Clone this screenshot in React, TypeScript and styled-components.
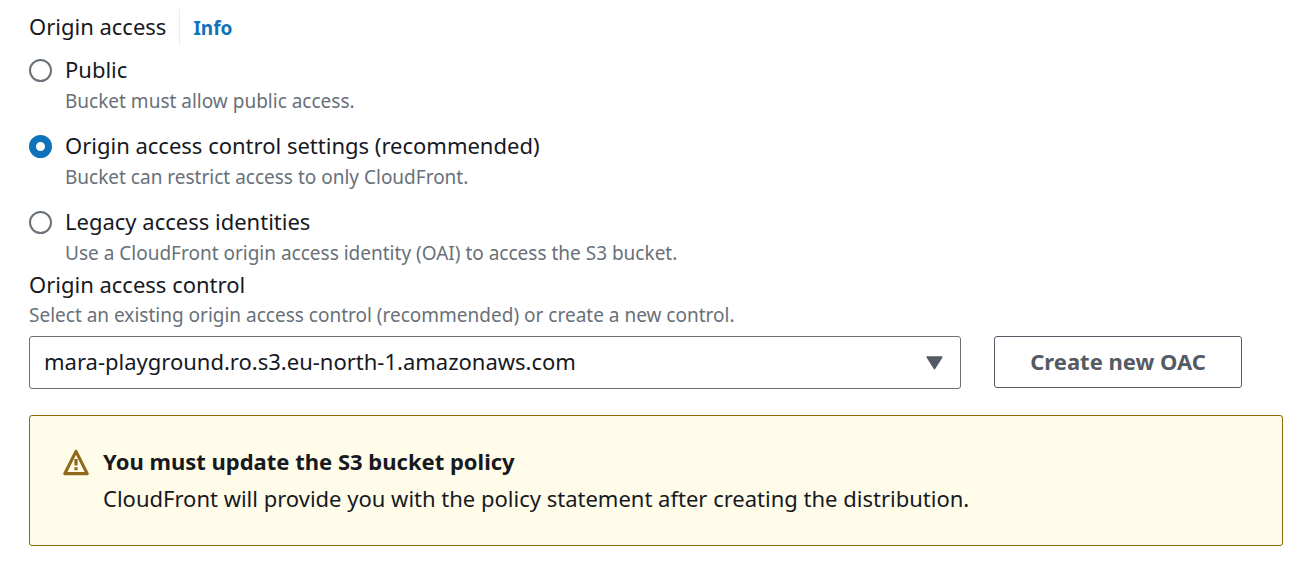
import React, { useState } from "react";
import styled, { createGlobalStyle } from "styled-components";

const GlobalStyle = createGlobalStyle`
  *, *::before, *::after { box-sizing: border-box; }
  body {
    margin: 0;
    background: #fff;
    color: #16191f;
    font-family: "Noto Sans", "Open Sans", sans-serif;
    font-size: 22px;
    line-height: 30px;
  }
`;

const Page = styled.main`
  padding: 9px 26px 36px 29px;
`;

const OptionGroup = styled.fieldset`
  margin: 0;
  padding: 0;
  border: 0;
  min-width: 0;
`;

const GroupHeader = styled.div`
  display: flex;
  align-items: flex-start;
  height: 37px;
  margin-bottom: 8px;
`;

const GroupTitle = styled.span`
  line-height: 34px;
`;

const InfoLink = styled.a`
  display: flex;
  align-items: center;
  height: 37px;
  margin-left: 13px;
  padding-left: 13px;
  border-left: 1px solid #eaeded;
  color: #0f73ba;
  font-size: 19px;
  font-weight: 700;
  text-decoration: none;
`;

const Options = styled.div`
  display: grid;
  gap: 14px;
`;

const Option = styled.div`
  display: grid;
  grid-template-columns: 24px 1fr;
  column-gap: 12px;
  row-gap: 2px;
`;

const Radio = styled.input`
  appearance: none;
  width: 23px;
  height: 23px;
  margin: 5px 0 0;
  border: 2px solid #687078;
  border-radius: 50%;
  background: #fff;

  &:checked {
    border: 7px solid #0f73ba;
  }
`;

const Description = styled.p`
  margin: 0;
  color: #687078;
  font-size: 19px;
  line-height: 30px;
`;

const OptionDescription = styled(Description)`
  grid-column: 2;
`;

const Field = styled.div`
  display: grid;
  row-gap: 1px;
  margin-top: 1px;
`;

const ControlRow = styled.div`
  display: grid;
  grid-template-columns: repeat(12, minmax(0, 1fr));
  column-gap: 33px;
  align-items: start;
  margin-top: 5px;
`;

const SelectBox = styled.div`
  grid-column: span 9;
  display: grid;
  align-items: center;

  & > * { grid-area: 1 / 1; }
`;

const Select = styled.select`
  appearance: none;
  width: 100%;
  height: 53px;
  padding: 0 50px 3px 14px;
  border: 1px solid #687078;
  border-radius: 3px;
  background: #fff;
  color: #16191f;
  font: inherit;
`;

const Caret = styled.svg`
  justify-self: end;
  margin-right: 18px;
  pointer-events: none;
`;

const Button = styled.button`
  grid-column: span 3;
  justify-self: start;
  height: 52px;
  padding: 0 35px 2px;
  border: 1px solid #545b64;
  border-radius: 3px;
  background: #fff;
  color: #545b64;
  font: inherit;
  font-weight: 700;
  white-space: nowrap;
`;

const Alert = styled.section`
  display: flex;
  align-items: flex-start;
  gap: 14px;
  margin-top: 26px;
  padding: 30px 33px 32px;
  border: 1px solid #906806;
  border-radius: 3px;
  background: #fffce9;
`;

const WarningIcon = styled.svg`
  flex: none;
  margin-top: 3px;
`;

const AlertTitle = styled.h2`
  margin: 0 0 7px;
  font-size: 22px;
  font-weight: 700;
  line-height: 30px;
`;

const AlertText = styled.p`
  margin: 0;
`;

const choices = [
  { id: "public", label: "Public", description: "Bucket must allow public access." },
  {
    id: "oac",
    label: "Origin access control settings (recommended)",
    description: "Bucket can restrict access to only CloudFront.",
  },
  {
    id: "legacy",
    label: "Legacy access identities",
    description: "Use a CloudFront origin access identity (OAI) to access the S3 bucket.",
  },
];

export default function App() {
  const [access, setAccess] = useState("oac");

  return (
    <>
      <GlobalStyle />
      <Page>
        <OptionGroup aria-labelledby="access-title">
          <GroupHeader>
            <GroupTitle id="access-title">Origin access</GroupTitle>
            <InfoLink href="#info">Info</InfoLink>
          </GroupHeader>
          <Options>
            {choices.map((choice) => (
              <Option key={choice.id}>
                <Radio
                  type="radio"
                  name="access"
                  id={choice.id}
                  checked={access === choice.id}
                  onChange={() => setAccess(choice.id)}
                  aria-describedby={`${choice.id}-description`}
                />
                <label htmlFor={choice.id}>{choice.label}</label>
                <OptionDescription id={`${choice.id}-description`}>
                  {choice.description}
                </OptionDescription>
              </Option>
            ))}
          </Options>
        </OptionGroup>

        <Field>
          <label htmlFor="origin-control">Origin access control</label>
          <Description id="control-description">
            Select an existing origin access control (recommended) or create a new control.
          </Description>
          <ControlRow>
            <SelectBox>
              <Select id="origin-control" aria-describedby="control-description">
                <option>mara-playground.ro.s3.eu-north-1.amazonaws.com</option>
              </Select>
              <Caret width="17" height="14" viewBox="0 0 17 14" aria-hidden="true">
                <path d="M1.2 1h14.6L8.5 12.6Z" fill="#545b64" stroke="#545b64" strokeWidth="1.6" strokeLinejoin="round" />
              </Caret>
            </SelectBox>
            <Button type="button">Create new OAC</Button>
          </ControlRow>
        </Field>

        <Alert>
          <WarningIcon width="26" height="27" viewBox="0 0 26 27" fill="none" stroke="#906a1c" aria-hidden="true">
            <path d="M13 2.4 24.2 24.6H1.8Z" strokeWidth="3.2" strokeLinejoin="round" />
            <path d="M13 10v6.5M13 18.2v3" strokeWidth="3.2" />
          </WarningIcon>
          <div>
            <AlertTitle>You must update the S3 bucket policy</AlertTitle>
            <AlertText>
              CloudFront will provide you with the policy statement after creating the distribution.
            </AlertText>
          </div>
        </Alert>
      </Page>
    </>
  );
}
